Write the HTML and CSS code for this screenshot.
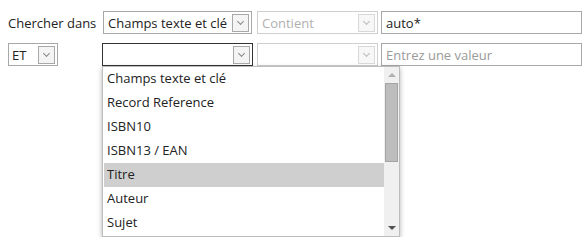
FILE: index.html
```html
<!DOCTYPE html>
<html lang="fr">
<head>
  <meta charset="UTF-8" />
  <title>Recherche avancée</title>
  <link rel="stylesheet" href="styles.css">
</head>
<body>
  <form class="search">
    <div class="row">
      <label class="lead">Chercher dans</label>
      <div class="select wide">
        <span class="value">Champs texte et clé</span>
        <span class="arrow"></span>
      </div>
      <div class="select mid disabled">
        <span class="value">Contient</span>
        <span class="arrow"></span>
      </div>
      <div class="field"><span class="value">auto*</span></div>
    </div>

    <div class="row">
      <div class="lead">
        <div class="select op">
          <span class="value">ET</span>
          <span class="arrow"></span>
        </div>
      </div>
      <div class="select wide focused">
        <span class="value"></span>
        <span class="arrow"></span>
      </div>
      <div class="select mid disabled">
        <span class="value"></span>
        <span class="arrow"></span>
      </div>
      <div class="field"><span class="value placeholder">Entrez une valeur</span></div>
    </div>

    <div class="drop-list">
      <div class="drop-items">
        <div class="drop-item">Champs texte et clé</div>
        <div class="drop-item">Record Reference</div>
        <div class="drop-item">ISBN10</div>
        <div class="drop-item">ISBN13 / EAN</div>
        <div class="drop-item current">Titre</div>
        <div class="drop-item">Auteur</div>
        <div class="drop-item">Sujet</div>
      </div>
      <div class="scroll">
        <span class="up"></span>
        <span class="thumb"></span>
        <span class="down"></span>
      </div>
    </div>
  </form>
</body>
</html>
```

FILE: styles.css
```css
html, body {
  margin: 0;
  padding: 0;
  background: #fff;
}
body {
  padding: 11px 8px 0;
  font-family: 'Open Sans', 'Noto Sans', sans-serif;
  font-size: 13px;
  color: #222;
}

.search {
  display: flex;
  flex-direction: column;
}
.row {
  display: flex;
  align-items: center;
  height: 23px;
}
.row + .row {
  margin-top: 9px;
}
.lead {
  width: 94px;
  flex: none;
  white-space: nowrap;
}

.select, .field {
  box-sizing: border-box;
  height: 23px;
  border: 1px solid #a8a8a8;
  background: #fff;
  display: flex;
  align-items: center;
  flex: none;
}
.select .value, .field .value {
  flex: 1;
  padding-left: 4px;
  white-space: nowrap;
  overflow: hidden;
}
.arrow {
  position: relative;
  width: 15px;
  height: 16px;
  margin-right: 2px;
  border: 1px solid #a8a8a8;
  background: #f4f4f4;
}
.arrow::after {
  content: "";
  position: absolute;
  left: 5px;
  top: 4px;
  width: 4px;
  height: 4px;
  border-right: 1px solid #888;
  border-bottom: 1px solid #888;
  transform: rotate(45deg);
}

.wide {
  width: 149px;
  margin-left: 1px;
}
.mid {
  width: 121px;
  margin-left: 5px;
}
.field {
  width: 201px;
  margin-left: 3px;
}
.op {
  width: 50px;
}
.op .value {
  padding-left: 3px;
}

.disabled {
  border-color: #cfcfcf;
  color: #b0b0b0;
}
.disabled .arrow {
  border-color: #d8d8d8;
  background: #f7f7f7;
}
.disabled .arrow::after {
  border-color: #bbb;
}
.placeholder {
  color: #9a9a9a;
}

.focused {
  width: 151px;
  margin-left: 0;
  border-color: #333;
}
.focused + .mid {
  margin-left: 4px;
}

.drop-list {
  margin: 0 0 0 94px;
  width: 298px;
  height: 171px;
  box-sizing: border-box;
  background: #fff;
  border: 1px solid #bdbdbd;
  box-shadow: 0 2px 5px rgba(0, 0, 0, 0.3);
  display: flex;
}
.drop-items {
  flex: 1;
  padding-left: 1px;
}
.drop-item {
  height: 24px;
  line-height: 23px;
  padding-left: 3px;
  color: #222;
}
.drop-item.current {
  background: #cfcfcf;
}
.scroll {
  width: 15px;
  background: #f0f0f0;
  display: flex;
  flex-direction: column;
  align-items: center;
}
.up, .down {
  width: 0;
  height: 0;
  border-left: 4px solid transparent;
  border-right: 4px solid transparent;
  margin: 6px 0;
}
.up {
  border-bottom: 4px solid #b0b0b0;
}
.down {
  border-top: 4px solid #505050;
  margin-top: auto;
}
.thumb {
  width: 13px;
  height: 79px;
  box-sizing: border-box;
  background: #bdbdbd;
  border: 1px solid #a4a4a4;
}
```
